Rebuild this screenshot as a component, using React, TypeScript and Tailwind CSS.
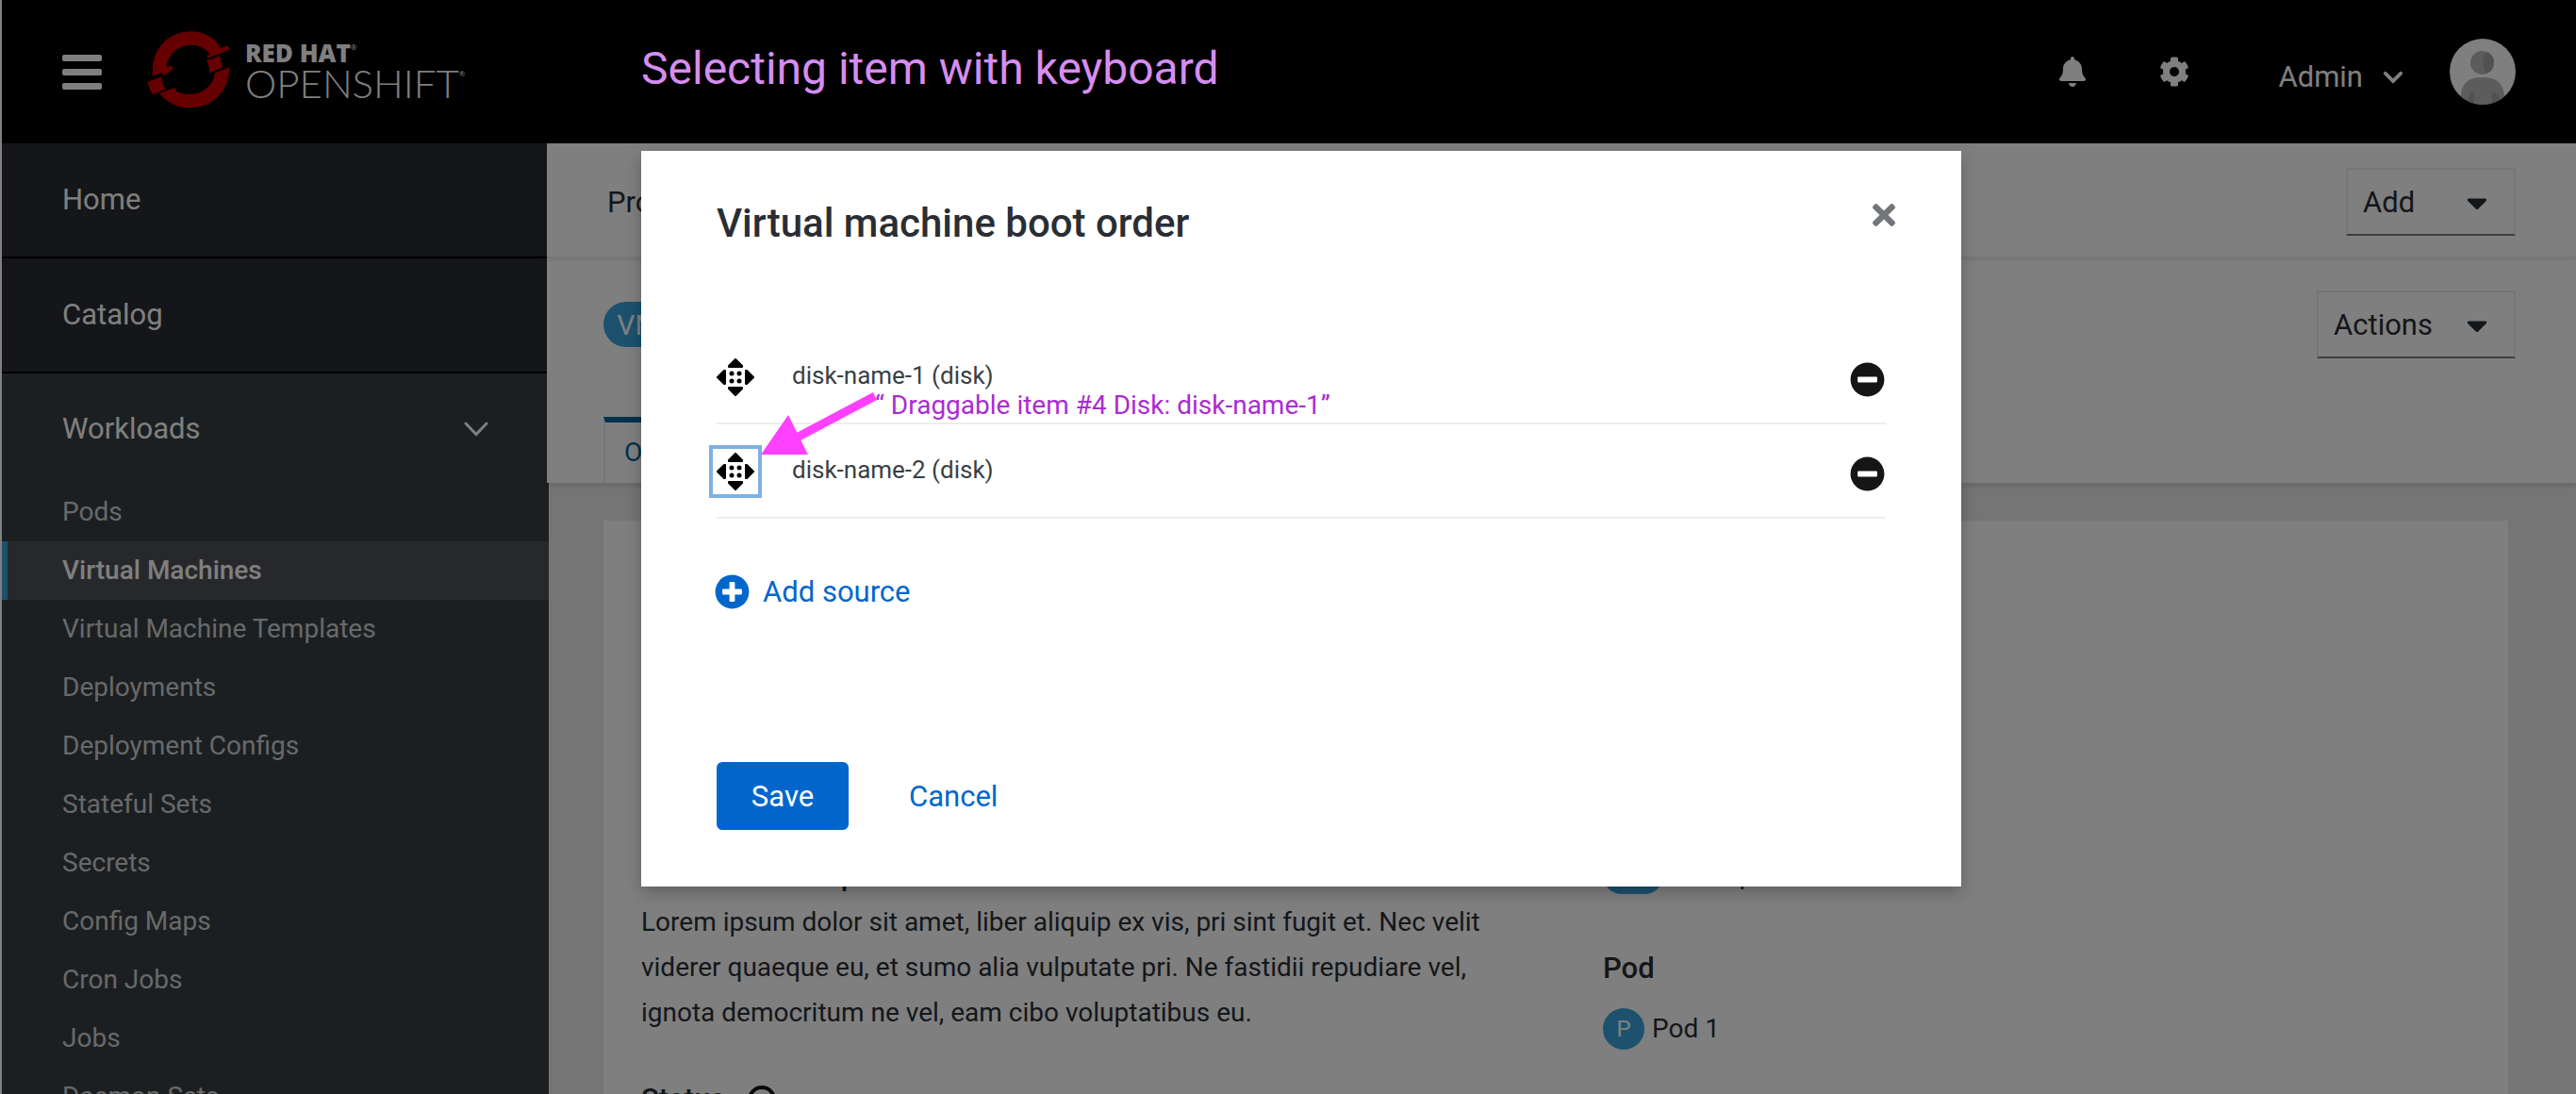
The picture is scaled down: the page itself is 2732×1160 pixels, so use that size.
import React from "react";
import {
  FaBell,
  FaCaretDown,
  FaChevronDown,
  FaCog,
  FaMinusCircle,
  FaPlusCircle,
  FaTimes,
} from "react-icons/fa";

const workloadLinks = [
  "Pods",
  "Virtual Machines",
  "Virtual Machine Templates",
  "Deployments",
  "Deployment Configs",
  "Stateful Sets",
  "Secrets",
  "Config Maps",
  "Cron Jobs",
  "Jobs",
  "Daemon Sets",
];

const disks = [
  { name: "disk-name-1 (disk)", focused: false, note: "Draggable item #4 Disk: disk-name-1”" },
  { name: "disk-name-2 (disk)", focused: true, note: "" },
];

function LogoMark() {
  return (
    <svg viewBox="0 0 88 84" className="h-[84px] w-[88px] fill-[#cc0000]" aria-hidden="true">
      <path d="M5.8 44.5 A40.5 40.5 0 0 1 46.3 1.3 A40.5 40.5 0 0 1 77 16.5 L76 19.5 L86 16.5 L88 20.5 L65 29.5 L63.5 27 L67 25.5 A26 26 0 0 0 46.3 15.8 A26 26 0 0 0 20.500 39.500 L26.500 37.500 L27.500 42 L17 48.500 L16 45 L5.500 48.500 Z" />
      <path d="M63 31.500 L69 30.500 L76.300 27 Q80 33 79.500 39.500 L66 45.500 Q66.500 38 63 31.500 Z" />
      <path d="M0.300 55 L15 49.500 Q16 57 20 62.500 L6 68 Q2 62 0.300 55 Z" />
      <path d="M87 39.500 A40.500 40.500 0 0 1 46.300 82.300 A40.500 40.500 0 0 1 13 67 L29 61 L31 63.500 L30 64 A26 26 0 0 0 46.300 68 A26 26 0 0 0 72 45 Z" />
    </svg>
  );
}

function Avatar() {
  return (
    <svg viewBox="0 0 70 70" className="size-[70px]" role="img" aria-label="User avatar">
      <defs>
        <clipPath id="avatar-clip">
          <circle cx="35" cy="35" r="35" />
        </clipPath>
      </defs>
      <g clipPath="url(#avatar-clip)">
        <rect width="70" height="70" fill="#fff" />
        <circle cx="34.500" cy="25.500" r="12.500" fill="#b8b8b8" />
        <path d="M39 14 Q31 25 39 37 Q47 34 47 25 Q47 17 39 14 Z" fill="#a3a3a3" />
        <path d="M12 70 V60 Q13 44 28 41.500 Q35 40.500 42 41.500 Q56 44 58 60 V70 Z" fill="#b8b8b8" />
        <path d="M20 70 V62 Q20 57 26 56 V70 Z M45 70 V57 Q52 58 53 63 V70 Z" fill="#a3a3a3" />
      </g>
    </svg>
  );
}

function MoveIcon() {
  return (
    <svg viewBox="0 0 40 40" className="size-10" aria-hidden="true">
      <g stroke="#000" strokeWidth="2" strokeLinejoin="round">
        <path d="M20 1 L27 8 V9 H13 V8 Z" />
        <path d="M20 39 L27 32 V31 H13 V32 Z" />
        <path d="M1 20 L8 13 H9 V27 H8 Z" />
        <path d="M39 20 L32 13 H31 V27 H32 Z" />
      </g>
      <circle cx="16" cy="16" r="2.500" />
      <circle cx="24" cy="16" r="2.500" />
      <circle cx="16" cy="24" r="2.500" />
      <circle cx="24" cy="24" r="2.500" />
    </svg>
  );
}

function Masthead() {
  return (
    <header className="flex h-[152px] shrink-0 items-center bg-black pr-16 pl-16 text-white">
      <button type="button" aria-label="Toggle navigation" className="flex w-[42px] flex-col gap-2">
        <span className="h-[7px] rounded-xs bg-white" />
        <span className="h-[7px] rounded-xs bg-white" />
        <span className="h-[7px] rounded-xs bg-white" />
      </button>
      <a href="#" className="ml-12 flex items-center gap-4 pb-1">
        <LogoMark />
        <span className="flex flex-col">
          <span className="flex font-['Open_Sans'] text-[26px] leading-7 font-extrabold">
            RED HAT<span className="text-[8px] leading-4 font-normal">®</span>
          </span>
          <span className="flex font-[Lato] text-[42px] leading-9 font-light">
            OPENSHIFT<span className="text-[8px] leading-4 font-normal">®</span>
          </span>
        </span>
      </a>
      <div className="ml-auto flex items-center">
        <button type="button" aria-label="Notifications">
          <FaBell className="h-8 w-7" />
        </button>
        <button type="button" aria-label="Settings" className="ml-[78px]">
          <FaCog className="size-8" />
        </button>
        <button type="button" className="ml-[94px] flex items-center gap-5 pt-3 text-[31px] leading-10">
          Admin
          <FaChevronDown className="size-6" />
        </button>
        <span className="ml-12">
          <Avatar />
        </span>
      </div>
    </header>
  );
}

function Sidebar() {
  return (
    <nav className="flex w-[580px] shrink-0 flex-col bg-[#383e42] text-white">
      <a href="#" className="flex h-[122px] shrink-0 items-center border-b-2 border-black bg-[#2a2c32] pl-16 text-[31px]">
        Home
      </a>
      <a href="#" className="flex h-[122px] shrink-0 items-center border-b-2 border-black bg-[#2a2c32] pl-16 text-[31px]">
        Catalog
      </a>
      <button type="button" className="flex h-[116px] shrink-0 items-center justify-between pt-0.5 pr-16 pl-16 text-[31px]">
        Workloads
        <svg viewBox="0 0 26 16" className="h-4 w-[26px] fill-none stroke-white stroke-3" aria-hidden="true">
          <path d="M2 2 L13 13.500 L24 2" strokeLinecap="round" />
        </svg>
      </button>
      <ul>
        {workloadLinks.map((label) => (
          <li key={label}>
            <a
              href="#"
              className={
                label === "Virtual Machines"
                  ? "flex h-[62px] items-center border-l-[6px] border-[#39a5dc] bg-[#4f5057] pl-[58px] text-[28px] font-medium"
                  : "flex h-[62px] items-center pl-16 text-[28px] text-[#d1d2d4]"
              }
            >
              {label}
            </a>
          </li>
        ))}
      </ul>
    </nav>
  );
}

function DropdownButton({ label }: { label: string }) {
  return (
    <button
      type="button"
      className="flex h-[72px] min-w-[180px] items-center justify-between gap-9 border-2 border-[#ededed] border-b-[#7b7d80] pt-0.5 pr-7 pl-4 text-[31px] text-[#292e34]"
    >
      {label}
      <FaCaretDown className="h-9 w-[22px]" />
    </button>
  );
}

function ResourceBadge({ text, className }: { text: string; className: string }) {
  return (
    <span className={`flex items-center justify-center rounded-full bg-[#39a5dc] text-white ${className}`}>
      {text}
    </span>
  );
}

function MainArea() {
  return (
    <main className="flex min-w-0 flex-1 flex-col bg-[#ebebeb] text-[#292e34]">
      <div className="relative z-10 -ml-0.5 flex h-[122px] shrink-0 items-center justify-between border-b-2 border-[#ededed] bg-white pt-1 pr-16 pl-16 shadow-[0_2px_4px_rgba(0,0,0,0.08)]">
        <span className="pt-0.5 text-[31px]">Project</span>
        <DropdownButton label="Add" />
      </div>
      <div className="relative -ml-0.5 flex h-[238px] shrink-0 flex-col justify-between bg-white pt-[34px] pr-16 pl-[60px] shadow-[0_3px_6px_rgba(0,0,0,0.12)]">
        <div className="flex items-center justify-between">
          <div className="flex items-center gap-4">
            <ResourceBadge text="VM" className="h-12 w-[74px] text-[30px]" />
          </div>
          <DropdownButton label="Actions" />
        </div>
        <div className="flex">
          <a
            href="#"
            className="flex h-[70px] items-center border-x-2 border-t-[6px] border-x-[#ededed] border-t-[#00659c] px-5 text-[28px] text-[#00659c]"
          >
            Overview
          </a>
        </div>
      </div>
      <section className="mt-10 mr-[72px] ml-[58px] flex flex-1 bg-white pt-[359px]">
        <div className="w-[1020px] shrink-0 pl-10">
          <h2 className="text-[31px] leading-9 font-medium">Machine description</h2>
          <p className="mt-[7px] w-[940px] text-[28px] leading-[48px]">
            Lorem ipsum dolor sit amet, liber aliquip ex vis, pri sint fugit et. Nec velit viderer quaeque eu, et
            sumo alia vulputate pri. Ne fastidii repudiare vel, ignota democritum ne vel, eam cibo voluptatibus eu.
          </p>
          <h2 className="mt-[50px] flex items-center gap-6 text-[31px] leading-9 font-medium">
            Status
            <span className="size-[30px] rounded-full border-4 border-[#151515]" />
          </h2>
        </div>
        <div className="pl-10">
          <div className="-mt-1 flex items-center gap-3 text-[28px]">
            <ResourceBadge text="NS" className="h-10 w-16 text-2xl" />
            example
          </div>
          <h2 className="mt-[60px] text-[31px] leading-9 font-medium">Pod</h2>
          <div className="mt-6 flex items-center gap-2 text-[28px]">
            <ResourceBadge text="P" className="size-11 text-2xl" />
            Pod 1
          </div>
        </div>
      </section>
    </main>
  );
}

function DiskRow({ name, focused, note }: { name: string; focused: boolean; note: string }) {
  return (
    <li className="relative flex h-[100px] items-center border-b-2 border-[#ededed] pt-0.5 pr-px">
      <button
        type="button"
        aria-label={`Move ${name}`}
        className={
          focused
            ? "-ml-2 flex size-14 items-center justify-center border-4 border-[#7eb0e2]"
            : "-ml-2 flex size-14 items-center justify-center"
        }
      >
        <MoveIcon />
      </button>
      <span className="ml-8 pb-1 text-[26px] leading-8 text-[#393f44]">{name}</span>
      <button type="button" aria-label={`Remove ${name}`} className="mt-1 ml-auto text-[#151515]">
        <FaMinusCircle className="size-[37px]" />
      </button>
      {note && (
        <>
          <p className="absolute top-[64px] left-[168px] text-[28px] leading-8 whitespace-nowrap text-[#ab2bd2]">
            “ {note}
          </p>
          <svg viewBox="0 0 124 68" className="absolute top-[65px] left-[47px] z-10 h-[68px] w-[124px]" aria-hidden="true">
            <path d="M121 5 L36 50" stroke="#ff40ff" strokeWidth="9" />
            <path d="M0 67 L29 25 L50 67 Z" fill="#ff40ff" />
          </svg>
        </>
      )}
    </li>
  );
}

function BootOrderDialog() {
  return (
    <div
      role="dialog"
      aria-modal="true"
      aria-labelledby="boot-order-title"
      className="bg-white px-20 pb-[60px] shadow-[0_6px_16px_rgba(0,0,0,0.25)]"
    >
      <div className="flex items-start justify-between pt-[50px]">
        <h2 id="boot-order-title" className="pt-0.5 text-[42px] leading-[50px] font-medium text-[#292e34]">
          Virtual machine boot order
        </h2>
        <button type="button" aria-label="Close" className="-mr-2.5 text-[#72767b]">
          <FaTimes className="h-9 w-6" />
        </button>
      </div>
      <ul className="mt-[88px]">
        {disks.map((disk) => (
          <DiskRow key={disk.name} {...disk} />
        ))}
      </ul>
      <button type="button" className="mt-14 -ml-0.5 flex items-center gap-[14px] text-[31px] leading-10 text-[#0066cc]">
        <FaPlusCircle className="size-[37px]" />
        <span className="pt-0.5">Add source</span>
      </button>
      <div className="mt-[160px] flex items-center">
        <button type="button" className="h-[72px] w-[140px] rounded-md bg-[#0066cc] pt-0.5 text-[31px] text-white">
          Save
        </button>
        <button type="button" className="ml-16 pt-0.5 text-[31px] text-[#0066cc]">
          Cancel
        </button>
      </div>
    </div>
  );
}

export default function App() {
  return (
    <div className="relative flex h-screen flex-col overflow-hidden border-l-2 border-[#808080] bg-white font-[Roboto,sans-serif]">
      <Masthead />
      <div className="flex min-h-0 flex-1">
        <Sidebar />
        <MainArea />
      </div>
      <div className="absolute inset-0 z-20 flex justify-center bg-black/50 pl-[26px]">
        <div className="w-[1400px] max-w-full">
          <p className="flex h-40 items-center pb-3.5 text-[48px] text-[#d68df0]">Selecting item with keyboard</p>
          <BootOrderDialog />
        </div>
      </div>
    </div>
  );
}
